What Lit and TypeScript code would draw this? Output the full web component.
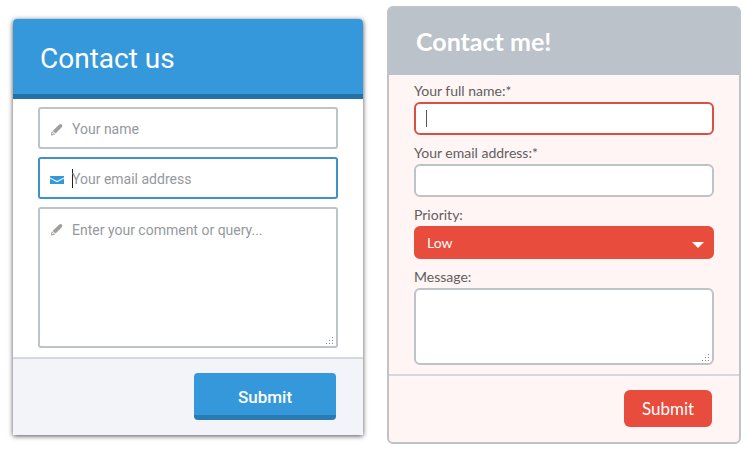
import { LitElement, html, css, svg } from "lit";
import { customElement } from "lit/decorators.js";

const pencil = html`<svg class="icon" viewBox="0 0 14 14" aria-hidden="true">
  <path fill="#a09f9c" d="M8.4 2.3 9.8 1.3Q11 .8 11.8 1.6T12.1 3.4L11.3 4.8 5.6 10.6 2.6 7.9Z" />
  <path fill="#a09f9c" d="M2.1 8.4 5 11.2 3.6 12 1 12.5 1.2 9.9Z" />
  <path fill="#f3efe6" d="M2.4 9.5 4 11 3.1 11.4 1.8 10.2Z" />
</svg>`;

const envelope = html`<svg class="icon" viewBox="0 0 14 14" aria-hidden="true">
  <path fill="#3498db" d="M0 3H14V4.4L7 8 0 4.4Z" />
  <path fill="#3498db" d="M0 5.6 7 9.3 14 5.6V11H0Z" />
</svg>`;

const gripDots = [[6, 0], [3, 3], [6, 3], [0, 6], [3, 6], [6, 6]];
const grip = html`<svg class="grip" viewBox="0 0 8 8" aria-hidden="true">
  ${gripDots.map(([x, y]) => svg`<rect x=${x} y=${y} width="1" height="1" fill="#888" />`)}
</svg>`;

const shared = css`
  *, *::before, *::after { box-sizing: border-box; }
  :host { display: block; min-width: 0; }
  h1 { margin: 0; }
  input, textarea, select, button { display: block; margin: 0; font: inherit; outline: none; }
  input, textarea, select { width: 100%; }
  textarea { resize: none; overflow: hidden; }
  footer { display: flex; justify-content: flex-end; border-top: 2px solid #d5d9dc; }
  .area { position: relative; }
  .grip { position: absolute; right: 4px; bottom: 3px; width: 8px; height: 8px; }
`;

@customElement("contact-us")
class ContactUs extends LitElement {
  static styles = [shared, css`
    .card {
      font-family: Roboto, sans-serif;
      background: #fff;
      border-radius: 4px 4px 0 0;
      box-shadow: 0 1px 5px rgba(0, 0, 0, 0.7);
    }
    header {
      padding: 22px 27px 18px;
      background: #3498db;
      border-bottom: 5px solid #2471a8;
      border-radius: 4px 4px 0 0;
    }
    h1 { font-size: 28px; line-height: 35px; font-weight: 400; color: #fff; }
    .fields { display: flex; flex-direction: column; gap: 8px; padding: 8px 25px 9px; }
    .field { position: relative; }
    .icon { position: absolute; left: 12px; top: 16px; width: 14px; height: 14px; }
    input, textarea {
      height: 42px;
      padding: 2px 32px 0;
      border: 2px solid #bdc3c7;
      border-radius: 3px;
      background: #fff;
      font-size: 14px;
      line-height: 20px;
      color: #333;
    }
    textarea { height: 141px; padding: 11px 32px; }
    ::placeholder { color: #95999d; opacity: 1; }
    .active {
      border-color: #3f92c9;
      background: linear-gradient(#222, #222) 32px 10px / 1px 19px no-repeat #fff;
    }
    footer { padding: 14px 27px 15px; background: #f2f4fa; }
    button {
      width: 142px;
      height: 47px;
      padding: 5px 0 0;
      border: 0;
      border-bottom: 5px solid #2a7ab3;
      border-radius: 4px;
      background: #3498db;
      color: #fff;
      font-size: 17px;
      font-weight: 500;
    }
  `];

  render() {
    return html`
      <form class="card">
        <header><h1>Contact us</h1></header>
        <div class="fields">
          <div class="field">
            <input type="text" placeholder="Your name" aria-label="Your name" />${pencil}
          </div>
          <div class="field">
            <input class="active" type="email" placeholder="Your email address" aria-label="Your email address" />${envelope}
          </div>
          <div class="field area">
            <textarea placeholder="Enter your comment or query..." aria-label="Enter your comment or query"></textarea>${pencil}${grip}
          </div>
        </div>
        <footer><button type="button">Submit</button></footer>
      </form>
    `;
  }
}

@customElement("contact-me")
class ContactMe extends LitElement {
  static styles = [shared, css`
    .card {
      font-family: Lato, sans-serif;
      background: #fff5f5;
      border: 2px solid #bdc3c7;
      border-radius: 6px;
    }
    header { padding: 17px 27px 18px; background: #bbc2ca; border-radius: 3px 3px 0 0; }
    h1 { font-size: 25px; line-height: 32px; font-weight: 700; color: #fff; }
    .fields { display: flex; flex-direction: column; gap: 9px; padding: 7px 25px 9px; }
    label { display: block; margin-bottom: 2px; font-size: 14px; line-height: 18px; color: #606060; }
    input, textarea, select {
      height: 33px;
      padding: 0 11px;
      border: 2px solid #bdc3c7;
      border-radius: 6px;
      background: #fff;
      font-size: 14px;
      color: #333;
    }
    textarea { height: 77px; padding: 6px 11px; }
    .active {
      border-color: #d94f42;
      background: linear-gradient(#555, #555) 10px 6px / 1px 17px no-repeat #fff;
    }
    .select { position: relative; }
    .arrow { position: absolute; right: 10px; top: 16px; width: 12px; height: 6px; pointer-events: none; }
    select { appearance: none; border-color: #e74c3c; background: #e74c3c; color: #fff; }
    footer { padding: 14px 27px 15px; }
    button {
      width: 88px;
      height: 37px;
      padding: 0;
      border: 0;
      border-radius: 6px;
      background: #e74c3c;
      color: #fff;
      font-size: 17px;
    }
  `];

  render() {
    return html`
      <form class="card">
        <header><h1>Contact me!</h1></header>
        <div class="fields">
          <div>
            <label for="name">Your full name:*</label>
            <input class="active" id="name" type="text" />
          </div>
          <div>
            <label for="email">Your email address:*</label>
            <input id="email" type="email" />
          </div>
          <div>
            <label for="priority">Priority:</label>
            <div class="select">
              <select id="priority"><option>Low</option></select>
              <svg class="arrow" viewBox="0 0 12 6" aria-hidden="true"><path d="M0 0H12L6 6Z" fill="#fff" /></svg>
            </div>
          </div>
          <div>
            <label for="message">Message:</label>
            <div class="area"><textarea id="message"></textarea>${grip}</div>
          </div>
        </div>
        <footer><button type="button">Submit</button></footer>
      </form>
    `;
  }
}

@customElement("app-root")
class AppRoot extends LitElement {
  static styles = css`
    :host { display: block; background: #fff; }
    .page {
      display: grid;
      grid-template-columns: 350fr 354fr;
      gap: 24px;
      align-items: start;
      padding: 6px 9px 11px 13px;
    }
    contact-us { padding-top: 13px; }
  `;

  render() {
    return html`<main class="page"><contact-us></contact-us><contact-me></contact-me></main>`;
  }
}
